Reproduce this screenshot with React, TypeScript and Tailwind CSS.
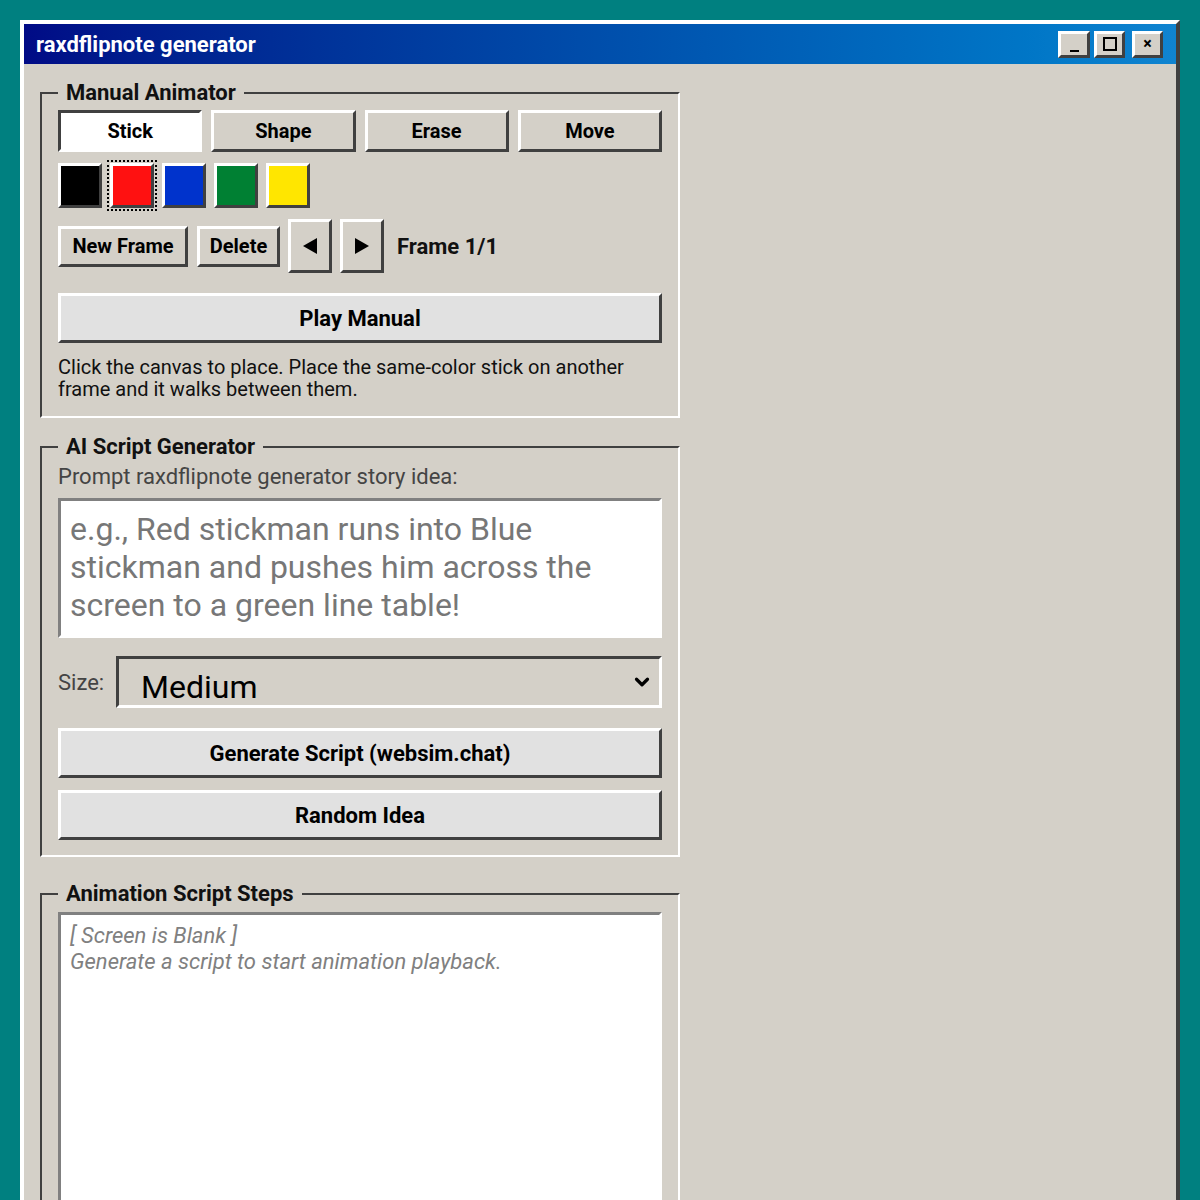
import { ChevronDown } from "lucide-react";

const raised =
  "border-[3px] border-t-white border-l-white border-r-[#404040] border-b-[#404040]";
const sunken =
  "border-[3px] border-t-[#404040] border-l-[#404040] border-r-white border-b-white";
const well =
  "border-[3px] border-t-[#808080] border-l-[#808080] border-r-white border-b-white bg-white";

const groupBox =
  "w-[640px] border-2 border-t-[#404040] border-l-[#404040] border-r-white border-b-white px-4";

const swatches = ["#000000", "#ff1111", "#0033cc", "#008033", "#ffe600"];

function GroupLegend({ children }: { children: React.ReactNode }) {
  return <legend className="px-2 text-[22px] font-bold leading-6 text-[#111]">{children}</legend>;
}

function Triangle({ dir }: { dir: "left" | "right" }) {
  return (
    <svg width="16" height="18" viewBox="0 0 16 18">
      {dir === "left" ? <path d="M15 1 L1 9 L15 17 Z" fill="#000" /> : <path d="M1 1 L15 9 L1 17 Z" fill="#000" />}
    </svg>
  );
}

export default function App() {
  return (
    <div
      className="h-[1200px] overflow-hidden bg-[#008080] pl-[20px] pt-[20px]"
      style={{ fontFamily: "Roboto, 'Noto Sans', sans-serif" }}
    >
      <div className="w-[1160px] h-[1300px] border-t-4 border-l-4 border-r-4 border-t-white border-l-white border-r-[#404040] bg-[#d4d0c8]">
        {/* Title bar */}
        <div className="h-[40px] flex items-center justify-between pl-[12px] pr-[13px] bg-gradient-to-r from-[#000a86] to-[#1084d0]">
          <span className="text-white text-[22px] font-bold">raxdflipnote generator</span>
          <div className="flex items-center">
            <button className={`${raised} w-[32px] h-[27px] bg-[#d4d0c8] flex items-end justify-center pb-[3px]`}>
              <span className="block w-[9px] h-[2px] bg-black" />
            </button>
            <button className={`${raised} ml-[4px] w-[31px] h-[27px] bg-[#d4d0c8] flex items-center justify-center`}>
              <span className="block w-[14px] h-[14px] border-2 border-black" />
            </button>
            <button className={`${raised} ml-[7px] w-[31px] h-[27px] bg-[#d4d0c8] flex items-center justify-center text-[16px] font-bold leading-none text-black`}>
              ×
            </button>
          </div>
        </div>

        {/* Body */}
        <div className="pl-4 pt-[17px]">
          {/* Manual Animator */}
          <fieldset className={`${groupBox} pb-[16px]`}>
            <GroupLegend>Manual Animator</GroupLegend>
            <div className="mt-[5px] grid grid-cols-4 gap-[9px] h-[42px]">
              {["Stick", "Shape", "Erase", "Move"].map((t, i) => (
                <button
                  key={t}
                  className={`${i === 0 ? `${sunken} bg-white` : `${raised} bg-[#d4d0c8]`} text-[20px] font-bold text-black`}
                >
                  {t}
                </button>
              ))}
            </div>

            <div className="mt-[11px] flex gap-[8px]">
              {swatches.map((c, i) => (
                <div
                  key={c}
                  className={`${raised} w-[44px] h-[45px] ${i === 1 ? "outline-2 outline-dotted outline-black outline-offset-[1px]" : ""}`}
                  style={{ backgroundColor: c }}
                />
              ))}
            </div>

            <div className="mt-[11px] flex items-center h-[54px]">
              <button className={`${raised} w-[130px] h-[41px] bg-[#d4d0c8] text-[20px] font-bold text-black`}>New Frame</button>
              <button className={`${raised} ml-[9px] w-[83px] h-[41px] bg-[#d4d0c8] text-[20px] font-bold text-black`}>Delete</button>
              <button className={`${raised} ml-[8px] w-[44px] h-[54px] bg-[#d4d0c8] flex items-center justify-center`}>
                <Triangle dir="left" />
              </button>
              <button className={`${raised} ml-[8px] w-[44px] h-[54px] bg-[#d4d0c8] flex items-center justify-center`}>
                <Triangle dir="right" />
              </button>
              <span className="ml-[13px] text-[22px] font-bold text-[#111]">Frame 1/1</span>
            </div>

            <button className={`${raised} mt-[20px] w-full h-[50px] bg-[#e1e1e1] text-[22px] font-bold text-black`}>
              Play Manual
            </button>

            <p className="mt-[13px] text-[20px] leading-[22px] text-[#111]">
              Click the canvas to place. Place the same-color stick on another frame and it walks between them.
            </p>
          </fieldset>

          {/* AI Script Generator */}
          <fieldset className={`${groupBox} mt-[17px] pb-[15px]`}>
            <GroupLegend>AI Script Generator</GroupLegend>
            <label className="block mt-[7px] text-[22px] leading-[22px] text-[#444]">
              Prompt raxdflipnote generator story idea:
            </label>
            <textarea
              className={`${well} mt-[10px] block w-full h-[140px] resize-none pl-[9px] pt-[9px] text-[32px] leading-[38px] text-black placeholder:text-[#777] outline-none`}
              placeholder="e.g., Red stickman runs into Blue stickman and pushes him across the screen to a green line table!"
            />

            <div className="mt-[18px] flex items-center">
              <span className="w-[58px] text-[22px] text-[#444]">Size:</span>
              <div className="relative flex-1">
                <select
                  defaultValue="Medium"
                  className={`${sunken} w-full h-[52px] appearance-none bg-[#d4d0c8] pl-[22px] pt-[4px] text-[32px] text-black outline-none`}
                >
                  <option>Small</option>
                  <option>Medium</option>
                  <option>Large</option>
                </select>
                <ChevronDown
                  size={22}
                  strokeWidth={3.5}
                  className="absolute right-[9px] top-[15px] text-black pointer-events-none"
                />
              </div>
            </div>

            <button className={`${raised} mt-[20px] w-full h-[50px] bg-[#e1e1e1] text-[22px] font-bold text-black`}>
              Generate Script (websim.chat)
            </button>
            <button className={`${raised} mt-[12px] w-full h-[50px] bg-[#e1e1e1] text-[22px] font-bold text-black`}>
              Random Idea
            </button>
          </fieldset>

          {/* Animation Script Steps */}
          <fieldset className={`${groupBox} mt-[25px]`}>
            <GroupLegend>Animation Script Steps</GroupLegend>
            <div className={`${well} mt-[6px] h-[400px] pl-[9px] pt-[8px] text-[22px] leading-[26px] italic text-[#808080]`}>
              <div>[ Screen is Blank ]</div>
              <div>Generate a script to start animation playback.</div>
            </div>
          </fieldset>
        </div>
      </div>
    </div>
  );
}
